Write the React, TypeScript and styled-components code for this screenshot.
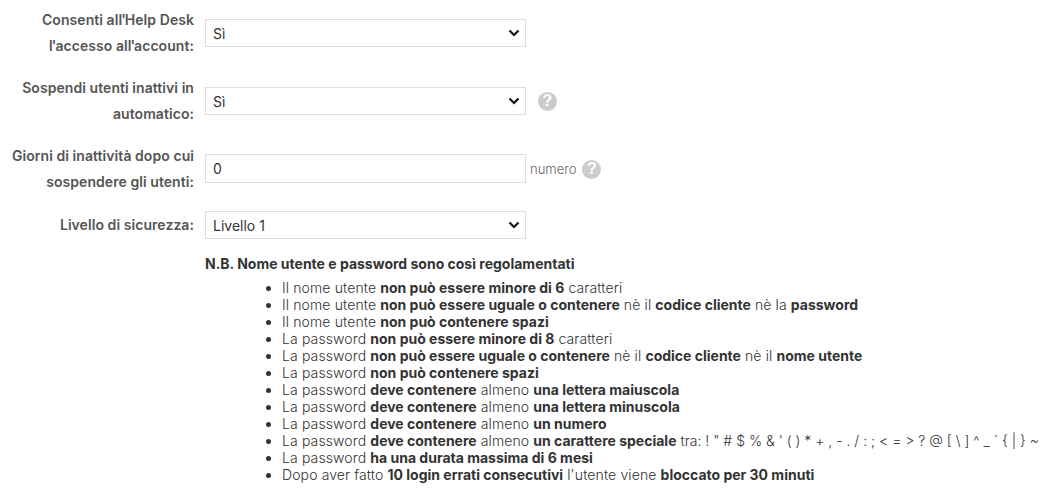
import React from 'react';
import styled, { createGlobalStyle } from 'styled-components';

const GlobalStyle = createGlobalStyle`
  html, body {
    margin: 0;
    padding: 0;
    background: #fff;
    font-family: Inter, "Liberation Sans", sans-serif;
    overflow: hidden;
  }
`;

const Page = styled.div`
  width: 1057px;
  height: 490px;
  padding-top: 7px;
  box-sizing: border-box;
  overflow: hidden;
`;

const Form = styled.div`
  display: flex;
  flex-direction: column;
  gap: 16px;
`;

const Row = styled.div`
  display: flex;
  align-items: center;
  gap: 11px;
`;

const Label = styled.label`
  width: 194px;
  flex: none;
  text-align: right;
  font-size: 14px;
  font-weight: 600;
  letter-spacing: 0.06px;
  line-height: 26px;
  color: #555;
`;

const Apostrophe = styled.span`
  margin: 0 -1px;
`;

const fieldCss = `
  width: 321px;
  box-sizing: border-box;
  background-color: #fff;
  border: 1px solid #ddd;
  border-radius: 0;
  font-family: Inter, "Liberation Sans", sans-serif;
  font-size: 14px;
  color: #333;
  outline: none;
`;

const chevron = `url("data:image/svg+xml,%3Csvg xmlns='http://www.w3.org/2000/svg' width='12' height='8' viewBox='0 0 12 8'%3E%3Cpath d='M1.5 1.5 6 6l4.5-4.5' fill='none' stroke='%23111' stroke-width='2.2'/%3E%3C/svg%3E")`;

const Select = styled.select`
  ${fieldCss}
  height: 28px;
  padding: 0 7px;
  appearance: none;
  background-image: ${chevron};
  background-repeat: no-repeat;
  background-position: right 5px center;
`;

const Input = styled.input`
  ${fieldCss}
  height: 29px;
  margin: 0 0 1px;
  padding: 0 7px;
`;

const Unit = styled.span`
  font-size: 13px;
  font-weight: 300;
  color: #666;
  margin-left: -7px;
`;

const HelpIcon = styled.span<{ $offset: number }>`
  width: 19px;
  height: 19px;
  flex: none;
  margin-left: ${p => p.$offset}px;
  border-radius: 50%;
  background: #ccc;
  color: #fff;
  display: flex;
  align-items: center;
  justify-content: center;
  font-family: "Liberation Sans", sans-serif;
  font-size: 16px;
  font-weight: 700;
`;

const Notes = styled.div`
  margin: 16px 0 0 205px;
  font-size: 14px;
  color: #333;
`;

const NotesTitle = styled.div`
  font-weight: 700;
  line-height: 17px;
  color: #333;
`;

const RuleList = styled.ul`
  margin: 7px 0 0;
  padding: 0 0 0 77px;
  line-height: 17px;
  font-weight: 300;
  letter-spacing: 0.12px;
  white-space: nowrap;
`;

const Strong = styled.b`
  font-weight: 700;
  letter-spacing: 0;
`;

const Symbols = styled.span`
  letter-spacing: 0;
`;

const rules: React.ReactNode[] = [
  <>Il nome utente <Strong>non può essere minore di 6</Strong> caratteri</>,
  <>Il nome utente <Strong>non può essere uguale o contenere</Strong> nè il <Strong>codice cliente</Strong> nè la <Strong>password</Strong></>,
  <>Il nome utente <Strong>non può contenere spazi</Strong></>,
  <>La password <Strong>non può essere minore di 8</Strong> caratteri</>,
  <>La password <Strong>non può essere uguale o contenere</Strong> nè il <Strong>codice cliente</Strong> nè il <Strong>nome utente</Strong></>,
  <>La password <Strong>non può contenere spazi</Strong></>,
  <>La password <Strong>deve contenere</Strong> almeno <Strong>una lettera maiuscola</Strong></>,
  <>La password <Strong>deve contenere</Strong> almeno <Strong>una lettera minuscola</Strong></>,
  <>La password <Strong>deve contenere</Strong> almeno <Strong>un numero</Strong></>,
  <>La password <Strong>deve contenere</Strong> almeno <Strong>un carattere speciale</Strong> <Symbols>tra: ! " # $ % & ' ( ) * + , - . / : ; &lt; = &gt; ? @ [ \ ] ^ _ ` {'{'} | {'}'} ~</Symbols></>,
  <>La password <Strong>ha una durata massima di 6 mesi</Strong></>,
  <>Dopo aver fatto <Strong>10 login errati consecutivi</Strong> l'utente viene <Strong>bloccato per 30 minuti</Strong></>,
];

const App: React.FC = () => (
  <Page>
    <GlobalStyle />
    <Form>
      <Row>
        <Label>Consenti all<Apostrophe>'</Apostrophe>Help Desk<br />l<Apostrophe>'</Apostrophe>accesso all<Apostrophe>'</Apostrophe>account:</Label>
        <Select defaultValue="si"><option value="si">Sì</option><option value="no">No</option></Select>
      </Row>
      <Row>
        <Label>Sospendi utenti inattivi in<br />automatico:</Label>
        <Select defaultValue="si"><option value="si">Sì</option><option value="no">No</option></Select>
        <HelpIcon $offset={1}>?</HelpIcon>
      </Row>
      <Row>
        <Label>Giorni di inattività dopo cui<br />sospendere gli utenti:</Label>
        <Input defaultValue="0" />
        <Unit>numero</Unit>
        <HelpIcon $offset={-5}>?</HelpIcon>
      </Row>
      <Row>
        <Label>Livello di sicurezza:</Label>
        <Select defaultValue="1"><option value="1">Livello 1</option></Select>
      </Row>
    </Form>
    <Notes>
      <NotesTitle>N.B. Nome utente e password sono così regolamentati</NotesTitle>
      <RuleList>
        {rules.map((rule, i) => <li key={i}>{rule}</li>)}
      </RuleList>
    </Notes>
  </Page>
);

export default App;
